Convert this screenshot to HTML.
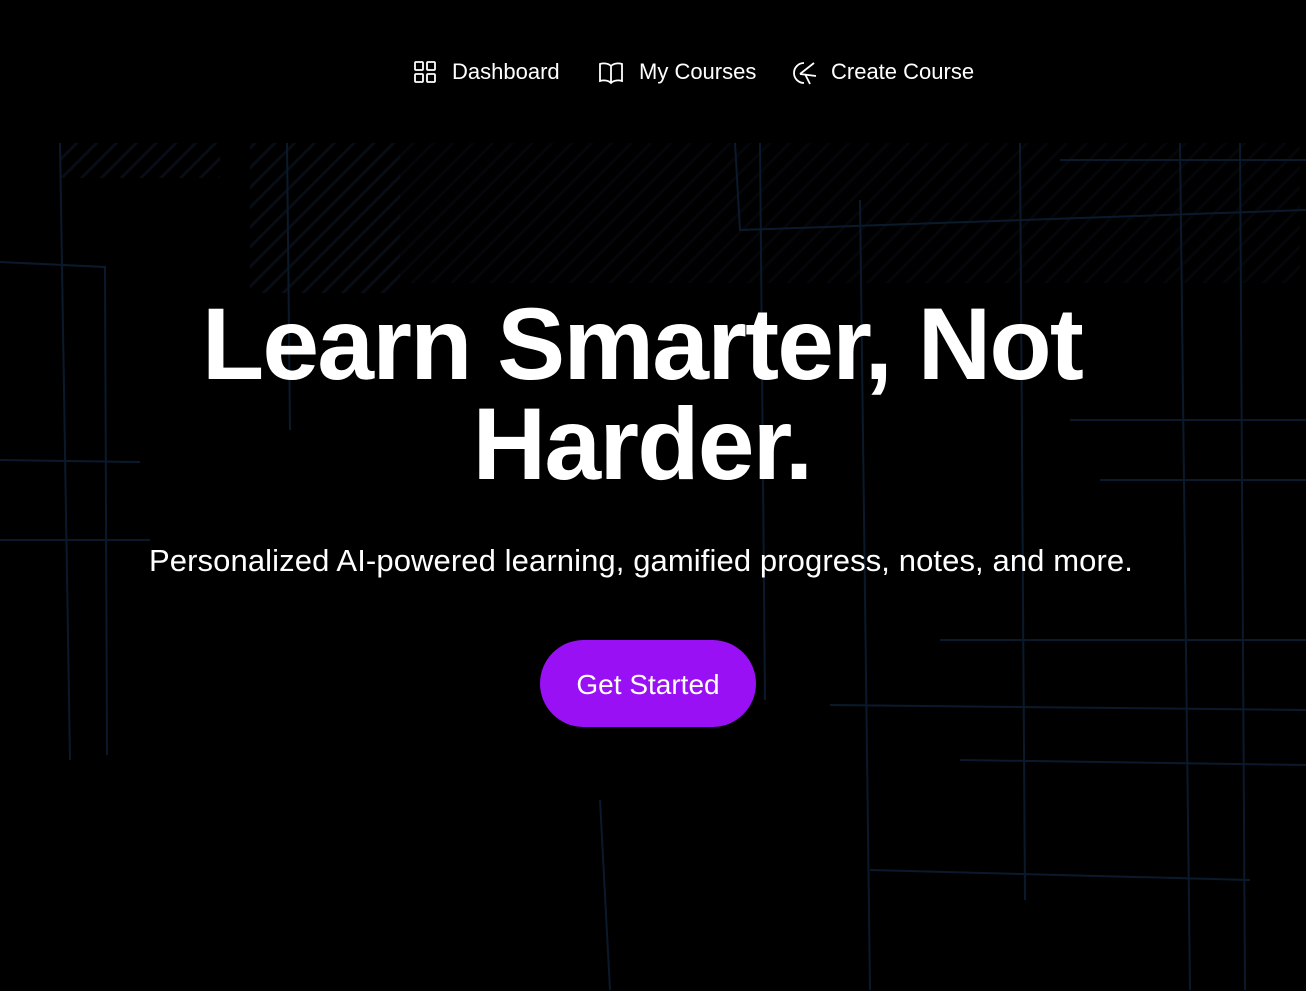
<!DOCTYPE html>
<html><head><meta charset="utf-8"><style>
html,body{margin:0;padding:0;width:1306px;height:991px;background:#000;overflow:hidden;font-family:"Liberation Sans",sans-serif;color:#fff}
.bg{position:absolute;left:0;top:0}
.nav{position:absolute;top:56px;left:0;width:1306px;height:32px}
.nav a{position:absolute;top:0;font-size:22px;color:#fff;text-decoration:none;line-height:32px;white-space:nowrap}
.nav svg{position:absolute;top:4px}
h1{position:absolute;top:294px;left:0;width:1284px;margin:0;text-align:center;font-size:102px;line-height:100px;font-weight:700;letter-spacing:-1.8px}
p{position:absolute;top:543px;left:0;width:1282px;margin:0;text-align:center;font-size:31px;letter-spacing:0.1px}
.btn{position:absolute;left:540px;top:640px;width:216px;height:87px;border-radius:44px;background:#9a10f5;font-size:28px;line-height:89px;text-align:center}
</style></head><body>
<svg class="bg" width="1306" height="991" stroke="#0a1a2c" stroke-width="2" fill="none">
<defs><pattern id="h" width="14" height="14" patternUnits="userSpaceOnUse" patternTransform="rotate(45)"><line x1="0" y1="0" x2="0" y2="14" stroke="#080c14" stroke-width="6"/></pattern></defs>
<rect x="60" y="143" width="160" height="35" fill="url(#h)" stroke="none"/>
<rect x="250" y="143" width="150" height="150" fill="url(#h)" stroke="none"/>
<rect x="400" y="143" width="900" height="140" fill="url(#h)" stroke="none" opacity=".5"/>
<path d="M60 143 L70 760 M0 262 L105 267 L107 755 M287 143 L290 430 M735 143 L740 230 L1306 210 M760 143 L765 700 M1020 143 L1025 900 M1060 160 L1306 160 M1180 143 L1190 990 M1240 143 L1245 990 M860 200 L870 990 M940 640 L1306 640 M830 705 L1306 710 M960 760 L1306 765 M870 870 L1250 880 M600 800 L610 990 M1070 420 L1306 420 M1100 480 L1306 480 M0 540 L150 540 M0 460 L140 462"/>
</svg>
<div class="nav">
<svg style="left:413px" width="24" height="24" viewBox="0 0 24 24" stroke="#fff" stroke-width="1.8" fill="none"><rect x="2" y="2" width="8" height="8" rx="1"/><rect x="14" y="2" width="8" height="8" rx="1"/><rect x="2" y="14" width="8" height="8" rx="1"/><rect x="14" y="14" width="8" height="8" rx="1"/></svg>
<a style="left:452px">Dashboard</a>
<svg style="left:598px" width="26" height="26" viewBox="0 0 26 26" stroke="#fff" stroke-width="1.8" fill="none"><path d="M13 6 C10 3 5 3 2 4 V21 C5 20 10 20 13 23 C16 20 21 20 24 21 V4 C21 3 16 3 13 6 Z M13 6 V23"/></svg>
<a style="left:639px">My Courses</a>
<svg style="left:790px" width="28" height="26" viewBox="0 0 28 26" stroke="#fff" stroke-width="1.8" fill="none"><path d="M14 3 A10 10 0 1 0 14 23 M10 14 L24 3 M10 14 L26 16 M15 14 L20 24"/></svg>
<a style="left:831px">Create Course</a>
</div>
<h1>Learn Smarter, Not<br>Harder.</h1>
<p>Personalized AI-powered learning, gamified progress, notes, and more.</p>
<div class="btn">Get Started</div>
</body></html>
